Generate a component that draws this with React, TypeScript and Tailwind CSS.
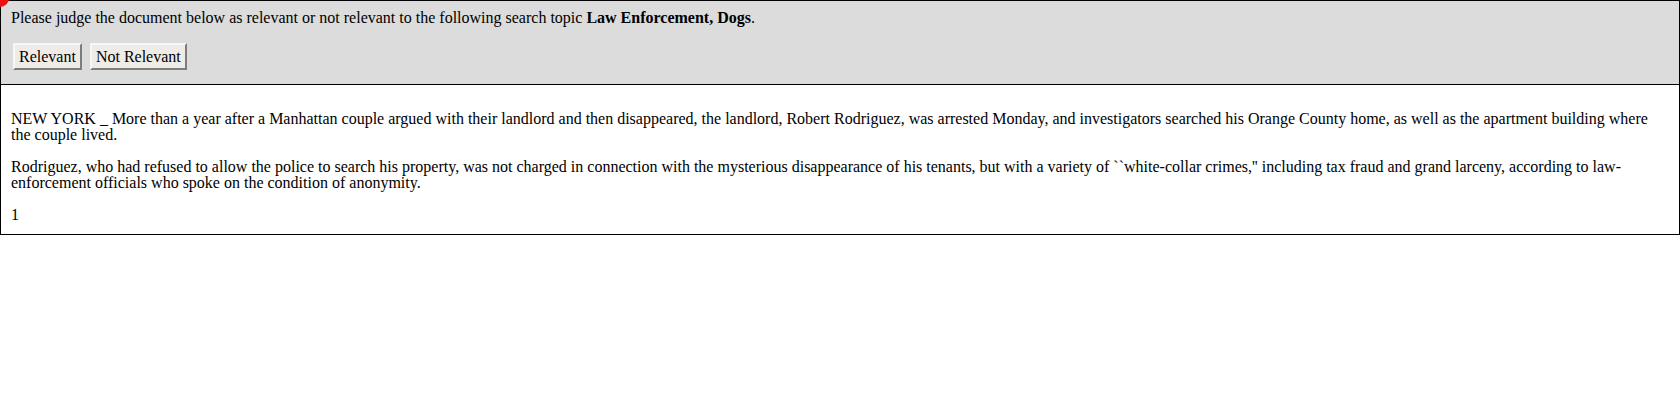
import React from "react";

const App = () => {
  return (
    <div className="relative w-[1680px] font-['Liberation_Serif',serif] text-[16px] text-black bg-white min-h-[400px]">
      <div className="absolute left-[-9px] top-[-11px] w-[18px] h-[18px] rounded-full bg-[#f01010] z-10"></div>
      <div className="bg-[#dcdcdc] border border-black px-[10px] pt-[8px] pb-[14px]">
        <p className="leading-[17px]">
          Please judge the document below as relevant or not relevant to the following search topic{" "}
          <b>Law Enforcement, Dogs</b>.
        </p>
        <div className="flex gap-[8px] mt-[17px] ml-[2px]">
          <button className="h-[27px] px-[4px] leading-4 bg-[#efece8] border-2 border-t-[#f7f7f7] border-l-[#f7f7f7] border-r-[#7d7d7d] border-b-[#7d7d7d]">
            Relevant
          </button>
          <button className="h-[27px] px-[4px] leading-4 bg-[#efece8] border-2 border-t-[#f7f7f7] border-l-[#f7f7f7] border-r-[#7d7d7d] border-b-[#7d7d7d]">
            Not Relevant
          </button>
        </div>
      </div>
      <div className="border border-t-0 border-black px-[10px] pt-[10px] pb-[11px]">
        <p className="my-4 leading-4">
          NEW YORK _ More than a year after a Manhattan couple argued with their landlord and then disappeared, the landlord, Robert Rodriguez, was arrested Monday, and investigators searched his Orange County home, as well as the apartment building where the couple lived.
        </p>
        <p className="my-4 leading-4">
          Rodriguez, who had refused to allow the police to search his property, was not charged in connection with the mysterious disappearance of his tenants, but with a variety of ``white-collar crimes,'' including tax fraud and grand larceny, according to law-enforcement officials who spoke on the condition of anonymity.
        </p>
        <div className="leading-4">1</div>
      </div>
    </div>
  );
};

export default App;
